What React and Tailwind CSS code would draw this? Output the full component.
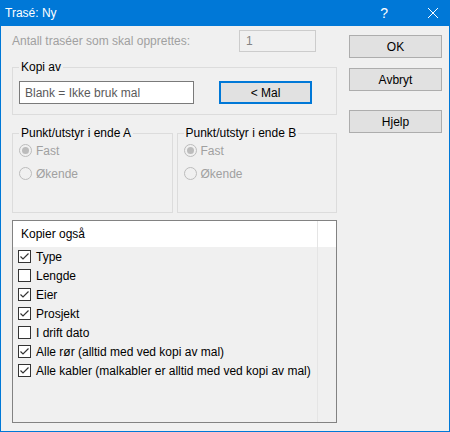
const font = { fontFamily: '"Liberation Sans", Arial, sans-serif' }

function Check({ checked, label }) {
  return (
    <div className="flex h-[19px] items-center pl-[5px]">
      <div className="flex h-[13px] w-[13px] items-center justify-center border border-[#333333] bg-white">
        {checked && (
          <svg width="11" height="11" viewBox="0 0 11 11">
            <path d="M1.5 5.5 L4 8 L9.5 2.5" fill="none" stroke="#333333" strokeWidth="1.2" />
          </svg>
        )}
      </div>
      <span className="ml-[5px] text-[12px] text-black">{label}</span>
    </div>
  )
}

function Radio({ checked, label }) {
  return (
    <div className="flex h-[23px] items-center">
      <div className="flex h-[13px] w-[13px] items-center justify-center rounded-full border border-[#bcbcbc] bg-[#f0f0f0]">
        {checked && <div className="h-[7px] w-[7px] rounded-full bg-[#bcbcbc]" />}
      </div>
      <span className="ml-[4px] text-[12px] text-[#a0a0a0]">{label}</span>
    </div>
  )
}

function Group({ title, children, className = '' }) {
  return (
    <fieldset className={'border border-[#dcdcdc] ' + className}>
      <legend className="ml-[6px] px-[2px] text-[12px] leading-[16px] text-black">{title}</legend>
      {children}
    </fieldset>
  )
}

function Btn({ children, focused }) {
  return (
    <button
      className={
        'flex h-[23px] w-[93px] items-center justify-center bg-[#e1e1e1] text-[12px] text-black ' +
        (focused ? 'border-2 border-[#0078d7]' : 'border border-[#adadad]')
      }
    >
      {children}
    </button>
  )
}

export default function App() {
  const items = [
    ['Type', true],
    ['Lengde', false],
    ['Eier', true],
    ['Prosjekt', true],
    ['I drift dato', false],
    ['Alle rør (alltid med ved kopi av mal)', true],
    ['Alle kabler (malkabler er alltid med ved kopi av mal)', true],
  ]

  return (
    <div style={font} className="flex h-[432px] w-[450px] flex-col border-x border-b border-[#0078d7] bg-[#f0f0f0]">
      <div className="flex h-[26px] shrink-0 items-center bg-[#0078d7] text-white">
        <span className="ml-[4px] text-[12px]">Trasé: Ny</span>
        <span className="ml-auto mr-[39px] text-[14px]">?</span>
        <svg className="mr-[10px]" width="12" height="12" viewBox="0 0 12 12">
          <path d="M1 1 L11 11 M11 1 L1 11" stroke="white" strokeWidth="1" />
        </svg>
      </div>

      <div className="flex pl-[11px]">
        <div className="flex w-[325px] flex-col">
          <div className="mt-[4px] flex h-[22px] items-center">
            <span className="text-[12px] text-[#a0a0a0]">Antall traséer som skal opprettes:</span>
            <div className="ml-auto mr-[21px] flex h-[22px] w-[77px] items-center border border-[#cccccc] pl-[6px] text-[12px] text-[#838383]">
              1
            </div>
          </div>

          <Group title="Kopi av" className="mt-[7px] h-[56px]">
            <div className="mt-[6px] flex items-center pl-[6px]">
              <div className="flex h-[23px] w-[175px] items-center border border-[#7a7a7a] bg-white pl-[5px] text-[12px] text-[#5a5a5a]">
                Blank = Ikke bruk mal
              </div>
              <div className="ml-[25px]">
                <Btn focused>&lt; Mal</Btn>
              </div>
            </div>
          </Group>

          <div className="mt-[10px] flex gap-[4px]">
            <Group title="Punkt/utstyr i ende A" className="h-[88px] w-[161px]">
              <div className="mt-[-2px] flex flex-col pl-[6px]">
                <Radio checked label="Fast" />
                <Radio label="Økende" />
              </div>
            </Group>
            <Group title="Punkt/utstyr i ende B" className="h-[88px] w-[161px]">
              <div className="mt-[-2px] flex flex-col pl-[6px]">
                <Radio checked label="Fast" />
                <Radio label="Økende" />
              </div>
            </Group>
          </div>

          <div className="mt-[7px] flex h-[203px] border border-[#828282]">
            <div className="flex w-[305px] flex-col border-r border-[#e5e5e5]">
              <div className="flex h-[26px] shrink-0 items-center bg-white pl-[8px] text-[12px] text-black">
                Kopier også
              </div>
              {items.map(([label, checked]) => (
                <Check key={label} label={label} checked={checked} />
              ))}
            </div>
            <div className="flex flex-1 flex-col">
              <div className="h-[26px] bg-white" />
            </div>
          </div>
        </div>

        <div className="ml-[12px] flex flex-col">
          <div className="mt-[9px]">
            <Btn>OK</Btn>
          </div>
          <div className="mt-[10px]">
            <Btn>Avbryt</Btn>
          </div>
          <div className="mt-[19px]">
            <Btn>Hjelp</Btn>
          </div>
        </div>
      </div>
    </div>
  )
}
